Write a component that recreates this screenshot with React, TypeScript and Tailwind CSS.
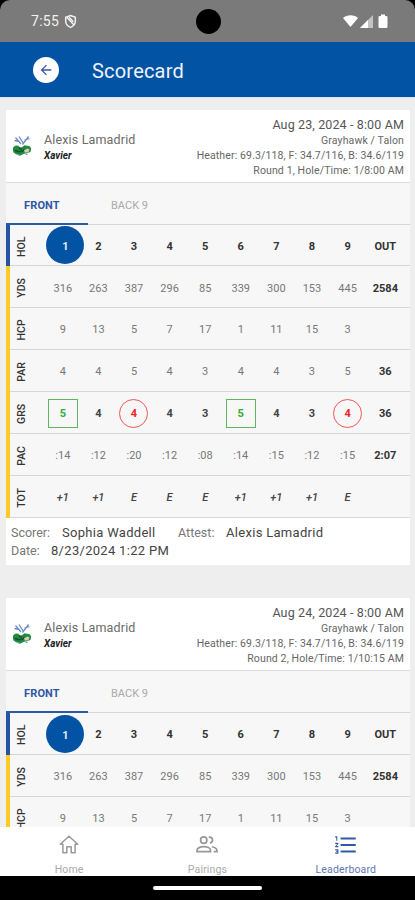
import { MdArrowBack, MdFormatListNumbered } from 'react-icons/md';

interface Round {
  id: number;
  date: string;
  tee: string;
}

const rounds: Round[] = [
  { id: 1, date: 'Aug 23, 2024 - 8:00 AM', tee: 'Round 1, Hole/Time: 1/8:00 AM' },
  { id: 2, date: 'Aug 24, 2024 - 8:00 AM', tee: 'Round 2, Hole/Time: 1/10:15 AM' },
];

const rows = [
  { label: 'HOL', cells: ['1', '2', '3', '4', '5', '6', '7', '8', '9'], total: 'OUT', style: 'font-bold text-[#333]' },
  { label: 'YDS', cells: ['316', '263', '387', '296', '85', '339', '300', '153', '445'], total: '2584', style: 'text-[#777]' },
  { label: 'HCP', cells: ['9', '13', '5', '7', '17', '1', '11', '15', '3'], total: '', style: 'text-[#777]' },
  { label: 'PAR', cells: ['4', '4', '5', '4', '3', '4', '4', '3', '5'], total: '36', style: 'text-[#777]' },
  { label: 'GRS', cells: ['5', '4', '4', '4', '3', '5', '4', '3', '4'], total: '36', style: 'font-bold text-[#444]' },
  { label: 'PAC', cells: [':14', ':12', ':20', ':12', ':08', ':14', ':15', ':12', ':15'], total: '2:07', style: 'text-[#777]' },
  { label: 'TOT', cells: ['+1', '+1', 'E', 'E', 'E', '+1', '+1', '+1', 'E'], total: '', style: 'font-medium italic text-[#444]' },
];

const bogeys = [0, 5];
const birdies = [2, 8];

const TeamLogo = () => (
  <svg viewBox="0 0 20 22" className="h-[22px] w-5 shrink-0">
    <path d="M3.5 2.5l5.5 6.5M7 1.5l4.500 7M16.500 1.500l-6 8M12.500 5l5-1.500M2.500 5.500l5 1" stroke="#6d8cc6" strokeWidth="1.3" fill="none" />
    <path d="M.8 14q.5-3.500 4-3.600 2-.2 2.700 1.600 1.500 1.300 3-.2l2.200-1.500 5 1 1.500 2.200-.7 3.500-3.500 1-3 .8-3.500 1.700-4.500-1.300-2.700-2z" fill="#218a3c" />
    <path d="M3 15.500l4 1.300 3.500-.8 1.500-1.500M7 13l2.500 1" stroke="#12502a" strokeWidth="1.5" fill="none" />
    <path d="M12 15.500l3.500-2 2 1-1 2.500-3.500.8z" fill="#dccabc" />
    <path d="M5.500 19.500l2.500 1M13 18.500l2.500 1.200" stroke="#7b9ac9" strokeWidth="1.3" />
  </svg>
);

const HomeIcon = () => (
  <svg viewBox="0 0 24 24" className="size-6" fill="none" stroke="#999" strokeWidth="1.5" strokeLinejoin="round">
    <path d="M12 3.200l8.700 8h-2.600v8.600h-3.900v-6H9.800v6H5.900v-8.600H3.300z" />
  </svg>
);

const PairingsIcon = () => (
  <svg viewBox="0 0 24 24" className="size-[26px]" fill="none" stroke="#999" strokeWidth="1.6">
    <circle cx="9" cy="7.500" r="2.900" />
    <path d="M2.800 18.200v-1.400c0-2 3-3.200 6.200-3.200s6.200 1.200 6.200 3.200v1.400z" />
    <path d="M13.700 4.800c3.800-.6 4.800 4.300 1 5.500M16.500 13.600c3 .5 4.700 1.900 4.700 3.600v1h-3" />
  </svg>
);

const StatusBar = () => (
  <div className="h-[42px] shrink-0 bg-black">
    <div className="flex h-full items-center justify-between rounded-t-[10px] bg-[#7a7a7a] pr-[26px] pl-[31px]">
      <div className="flex w-[130px] items-center gap-[5px]">
        <span className="text-[14px] tracking-[0.3px] text-[#f1f1f1]">7:55</span>
        <svg viewBox="0 0 14 16" className="h-[15px] w-[13px]" fill="none" stroke="#f1f1f1" strokeWidth="1.6">
          <path d="M7 1.500l5.200 2v4.300c0 3.200-2.200 5.400-5.200 6.500-3-1.100-5.200-3.300-5.200-6.500V3.500z" />
          <path d="M3 3.500l7.800 8.200M5.500 3.500l4.600 4.700" />
        </svg>
      </div>
      <div className="mr-1 size-[25px] rounded-full bg-black" />
      <div className="flex w-[130px] items-center justify-end">
        <svg viewBox="0 0 46 15" className="h-[15px] w-[46px]">
          <path d="M0 4C4 .3 11 .3 15 4L7.500 13z" fill="#fff" />
          <path d="M30 1v13H17z" fill="#c3c3c3" />
          <path d="M25 6v8h-8z" fill="#fff" />
          <path d="M38 2V.500h4V2h1.200q1.300 0 1.300 1.300v9.400q0 1.300-1.300 1.300h-6.400q-1.300 0-1.300-1.300V3.300Q35.500 2 36.800 2z" fill="#fff" />
        </svg>
      </div>
    </div>
  </div>
);

const ScoreCell = ({ label, value, index }: { label: string; value: string; index: number }) => {
  if (label === 'HOL' && index === 0) {
    return (
      <span className="mt-px mr-[-5px] flex size-[38px] shrink-0 items-center justify-center rounded-full bg-[#0353a4] pt-1 text-[#e4edf7]">
        {value}
      </span>
    );
  }
  if (label === 'GRS' && bogeys.includes(index)) {
    return (
      <span className="mt-px flex h-[29px] w-[30px] items-center justify-center border border-[#5fb562] pt-0.5 text-[#2fae35]">
        {value}
      </span>
    );
  }
  if (label === 'GRS' && birdies.includes(index)) {
    return (
      <span className="mt-px flex size-[29px] items-center justify-center rounded-full border border-[#ef5555] pt-0.5 text-[#ef2525]">
        {value}
      </span>
    );
  }
  return <span className="pt-1">{value}</span>;
};

const RoundCard = ({ round }: { round: Round }) => (
  <section className="h-[455.5px] shrink-0 bg-white">
    <header className="flex h-[73px] items-center justify-between border-b border-[#dcdcdc] pr-[6px] pl-[6px]">
      <div className="flex items-center gap-3">
        <TeamLogo />
        <div className="pt-1">
          <div className="text-[12.5px] leading-4 tracking-[0.15px] text-[#6b6b6b]">Alexis Lamadrid</div>
          <div className="text-[10px] leading-4 font-bold text-[#222] italic">Xavier</div>
        </div>
      </div>
      <div className="pt-[3px] text-right text-[10.5px] leading-[15px] tracking-[0.13px] whitespace-nowrap text-[#666]">
        <div className="text-[12.5px] leading-4 text-[#555]">{round.date}</div>
        <div>Grayhawk / Talon</div>
        <div>Heather: 69.3/118, F: 34.7/116, B: 34.6/119</div>
        <div>{round.tee}</div>
      </div>
    </header>

    <div className="flex h-[42px] border-b border-[#d6d6d6] bg-[#f7f7f7] text-[11px] leading-[46px]">
      <div className="h-[42px] w-[82px] border-b-2 border-[#2f59a3] pl-[18px] font-bold tracking-[0.15px] text-[#3157a4]">FRONT</div>
      <div className="pl-[23px] text-[#aaa]">BACK 9</div>
    </div>

    <div className="bg-[#f7f7f7] text-[11px]">
      {rows.map((row) => (
        <div key={row.label} className="flex h-[41.9px]">
          <div className={row.label === 'HOL' ? 'w-1 bg-[#2455a4]' : 'w-1 bg-[#ffc928]'} />
          <div className="flex flex-1 items-center border-b border-[#d6d6d6]">
            <div className="flex w-[35px] items-center justify-center pt-[3px] pr-[11px]">
              <span className="-rotate-90 text-[10.5px] font-medium text-[#333]">{row.label}</span>
            </div>
            {row.cells.map((value, i) => (
              <div key={i} className={`flex w-[35.6px] shrink-0 items-center justify-center ${row.style}`}>
                <ScoreCell label={row.label} value={value} index={i} />
              </div>
            ))}
            <div className="w-[40px] pt-1 text-center font-bold text-[#333]">{row.total}</div>
          </div>
        </div>
      ))}
    </div>

    <footer className="px-[5px] pt-[6px] text-[13px] leading-[18px] tracking-[0.3px] text-[#444]">
      <div className="flex">
        <span className="w-[51px] text-[12.5px] tracking-normal text-[#777]">Scorer:</span>
        <span className="w-[116px]">Sophia Waddell</span>
        <span className="w-12 text-[12.5px] tracking-normal text-[#777]">Attest:</span>
        <span>Alexis Lamadrid</span>
      </div>
      <div className="flex">
        <span className="w-10 text-[12.5px] tracking-normal text-[#777]">Date:</span>
        <span>8/23/2024 1:22 PM</span>
      </div>
    </footer>
  </section>
);

const App = () => {
  return (
    <div className="flex h-[900px] w-[415px] flex-col overflow-hidden bg-[#eee] font-['Roboto',sans-serif]">
      <StatusBar />

      <div className="flex h-14 shrink-0 items-center border-b border-[#dce5ee] bg-[#0353a4] pl-[33px]">
        <div className="flex size-[26px] items-center justify-center rounded-full bg-white">
          <MdArrowBack className="size-4 text-[#3b55a5]" />
        </div>
        <h1 className="ml-[33px] pt-[3px] text-[20px] tracking-[0.2px] text-[#edf4fc]">Scorecard</h1>
      </div>

      <main className="flex min-h-0 flex-1 flex-col gap-[33px] overflow-hidden pt-[11.5px] pr-[5px] pl-1.5">
        {rounds.map((round) => (
          <RoundCard key={round.id} round={round} />
        ))}
      </main>

      <nav className="grid h-[49px] shrink-0 grid-cols-3 bg-white text-[10.5px] leading-3 tracking-[0.15px] text-[#aaa]">
        <div className="flex flex-col items-center pt-1">
          <div className="flex h-[27px] items-center">
            <HomeIcon />
          </div>
          <span className="mt-[6px]">Home</span>
        </div>
        <div className="flex flex-col items-center pt-1">
          <div className="flex h-[27px] items-center">
            <PairingsIcon />
          </div>
          <span className="mt-[6px]">Pairings</span>
        </div>
        <div className="flex flex-col items-center pt-1 text-[#5f77b4]">
          <div className="flex h-[27px] items-center">
            <MdFormatListNumbered className="size-[26px] text-[#3159a8]" />
          </div>
          <span className="mt-[6px]">Leaderboard</span>
        </div>
      </nav>

      <div className="flex h-6 shrink-0 items-center justify-center bg-black">
        <div className="h-1 w-[109px] rounded-full bg-white" />
      </div>
    </div>
  );
};

export default App;
